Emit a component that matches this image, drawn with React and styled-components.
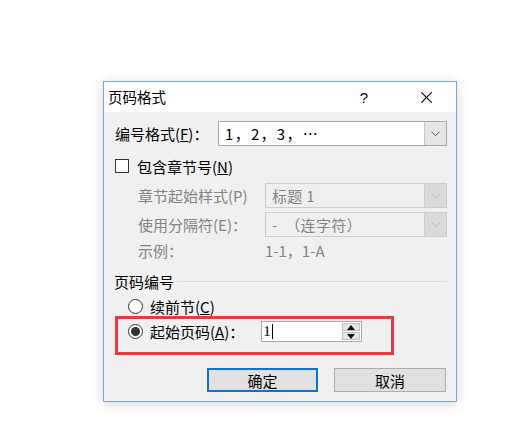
import React from "react";
import styled, { createGlobalStyle } from "styled-components";

const Global = createGlobalStyle`
  html, body { margin: 0; padding: 0; background: #ffffff; }
  body { font-family: "Noto Sans CJK SC", "Noto Sans", sans-serif; }
  * { box-sizing: border-box; }
`;

const Page = styled.div`
  width: 507px;
  height: 436px;
  padding: 81px 0 0 103px;
  background: #ffffff;
`;

const Dialog = styled.div`
  width: 354px;
  height: 321px;
  border: 1px solid #7aa6da;
  box-shadow: 0 2px 12px rgba(0, 0, 0, 0.16);
  display: flex;
  flex-direction: column;
  background: #f0f0f0;
`;

const TitleBar = styled.div`
  height: 31px;
  background: #ffffff;
  display: flex;
  align-items: center;
  padding-left: 4px;
  font-size: 14.5px;
  color: #000;
`;

const Title = styled.div`
  flex: 1;
  line-height: 1;
`;

const Help = styled.div`
  width: 20px;
  text-align: center;
  font-family: "Liberation Sans", sans-serif;
  font-size: 15px;
  margin-right: 47px;
  line-height: 1;
`;

const Close = styled.div`
  width: 11px;
  height: 11px;
  margin-right: 24px;
  display: flex;
`;

const Body = styled.div`
  flex: 1;
  display: flex;
  flex-direction: column;
  padding: 9px 9px 9px 0;
  font-size: 15px;
  color: #000;
`;

const Row = styled.div`
  display: flex;
  align-items: center;
  height: ${(p) => p.$h}px;
  margin-top: ${(p) => p.$mt || 0}px;
  padding-left: ${(p) => p.$pl || 0}px;
  color: ${(p) => (p.$disabled ? "#838383" : "#000")};
  white-space: nowrap;
  line-height: 1;
`;

const Label = styled.div`
  width: ${(p) => p.$w}px;
  flex: none;
`;

const Combo = styled.div`
  flex: 1;
  height: 25px;
  display: flex;
  border: 1px solid ${(p) => (p.$disabled ? "#cccccc" : "#a9a9a9")};
  background: ${(p) => (p.$disabled ? "#efefef" : "#ffffff")};
  color: ${(p) => (p.$disabled ? "#838383" : "#000")};
`;

const ComboText = styled.div`
  flex: 1;
  display: flex;
  align-items: center;
  padding-left: 6px;
  letter-spacing: ${(p) => p.$ls || 0.3}px;
`;

const DropBtn = styled.div`
  width: 22px;
  flex: none;
  display: flex;
  align-items: center;
  justify-content: center;
  background: ${(p) => (p.$disabled ? "#dadada" : "#e5e5e5")};
  border-left: 1px solid ${(p) => (p.$disabled ? "#cfcfcf" : "#c4c4c4")};
`;

const Check = styled.div`
  width: 14px;
  height: 14px;
  border: 1px solid #333;
  background: #fff;
  margin-right: 8px;
  flex: none;
`;

const Group = styled.div`
  display: flex;
  align-items: center;
  height: 20px;
  margin-top: 11px;
  padding-left: 10px;
  line-height: 1;
`;

const GroupLine = styled.div`
  flex: 1;
  height: 1px;
  background: #dcdcdc;
  margin-left: 3px;
`;

const Radio = styled.div`
  width: 15px;
  height: 15px;
  border-radius: 50%;
  border: 1px solid #333;
  background: #fff;
  display: flex;
  align-items: center;
  justify-content: center;
  margin-right: 7px;
  flex: none;
  &::after {
    content: "";
    display: ${(p) => (p.$on ? "block" : "none")};
    width: 9px;
    height: 9px;
    border-radius: 50%;
    background: #333;
  }
`;

const Highlight = styled.div`
  margin-left: 11px;
  width: 279px;
  height: 39px;
  border: 3px solid #e63a3c;
  display: flex;
  align-items: flex-start;
  padding: 2px 0 0 10px;
`;

const HighRow = styled.div`
  display: flex;
  align-items: center;
  height: 21px;
  white-space: nowrap;
  line-height: 1;
`;

const Spin = styled.div`
  width: 101px;
  height: 21px;
  margin-left: 17px;
  border: 1px solid #a9a9a9;
  background: #fff;
  display: flex;
`;

const SpinText = styled.div`
  flex: 1;
  display: flex;
  align-items: center;
  padding-left: 1px;
  font-family: "Liberation Serif", serif;
  font-size: 15px;
`;

const Caret = styled.span`
  display: inline-block;
  width: 1px;
  height: 15px;
  background: #000;
  margin-left: 1px;
`;

const SpinBtns = styled.div`
  width: 19px;
  display: flex;
  flex-direction: column;
  gap: 1px;
  padding: 1px 1px 1px 0;
`;

const SpinBtn = styled.div`
  flex: 1;
  background: #e5e5e5;
  border: 1px solid #c2c2c2;
  display: flex;
  align-items: center;
  justify-content: center;
`;

const Buttons = styled.div`
  display: flex;
  justify-content: flex-end;
  gap: 16px;
  margin-top: 13px;
  padding-right: 1px;
`;

const Button = styled.div`
  width: ${(p) => p.$w}px;
  height: 24px;
  display: flex;
  align-items: center;
  justify-content: center;
  background: #e1e1e1;
  border: ${(p) => (p.$primary ? "2px solid #0a74d0" : "1px solid #adadad")};
  font-size: 15px;
  color: #000;
`;

const Chevron = ({ color = "#555" }) => (
  <svg width="9" height="6" viewBox="0 0 9 6">
    <polyline points="0.5,0.8 4.5,4.8 8.5,0.8" fill="none" stroke={color} strokeWidth="1" />
  </svg>
);

const Tri = ({ up }) => (
  <svg width="8" height="5" viewBox="0 0 8 5">
    <polygon points={up ? "0,5 4,0 8,5" : "0,0 8,0 4,5"} fill="#111" />
  </svg>
);

export default function App() {
  return (
    <Page>
      <Global />
      <Dialog>
        <TitleBar>
          <Title>页码格式</Title>
          <Help>?</Help>
          <Close>
            <svg width="11" height="11" viewBox="0 0 11 11">
              <line x1="0.3" y1="0.3" x2="10.7" y2="10.7" stroke="#000" strokeWidth="1.1" />
              <line x1="10.7" y1="0.3" x2="0.3" y2="10.7" stroke="#000" strokeWidth="1.1" />
            </svg>
          </Close>
        </TitleBar>
        <Body>
          <Row $h={25} $pl={11}>
            <Label $w={103}>
              编号格式(<u>F</u>)：
            </Label>
            <Combo>
              <ComboText $ls={1.3}>1，2，3，…</ComboText>
              <DropBtn>
                <Chevron />
              </DropBtn>
            </Combo>
          </Row>
          <Row $h={20} $mt={10} $pl={11}>
            <Check />
            包含章节号(<u>N</u>)
          </Row>
          <Row $h={25} $mt={7} $pl={34} $disabled>
            <Label $w={127}>章节起始样式(P)</Label>
            <Combo $disabled>
              <ComboText>标题 1</ComboText>
              <DropBtn $disabled>
                <Chevron color="#b8b8b8" />
              </DropBtn>
            </Combo>
          </Row>
          <Row $h={25} $mt={4} $pl={34} $disabled>
            <Label $w={127}>使用分隔符(E)：</Label>
            <Combo $disabled>
              <ComboText>-　（连字符）</ComboText>
              <DropBtn $disabled>
                <Chevron color="#b8b8b8" />
              </DropBtn>
            </Combo>
          </Row>
          <Row $h={20} $mt={3} $pl={34} $disabled>
            <Label $w={127}>示例：</Label>
            1-1，1-A
          </Row>
          <Group>
            页码编号
            <GroupLine />
          </Group>
          <Row $h={19} $mt={6} $pl={24}>
            <Radio />
            续前节(<u>C</u>)
          </Row>
          <Highlight>
            <HighRow>
              <Radio $on />
              起始页码(<u>A</u>)：
              <Spin>
                <SpinText>
                  1<Caret />
                </SpinText>
                <SpinBtns>
                  <SpinBtn>
                    <Tri up />
                  </SpinBtn>
                  <SpinBtn>
                    <Tri />
                  </SpinBtn>
                </SpinBtns>
              </Spin>
            </HighRow>
          </Highlight>
          <Buttons>
            <Button $w={111} $primary>
              确定
            </Button>
            <Button $w={112}>取消</Button>
          </Buttons>
        </Body>
      </Dialog>
    </Page>
  );
}
